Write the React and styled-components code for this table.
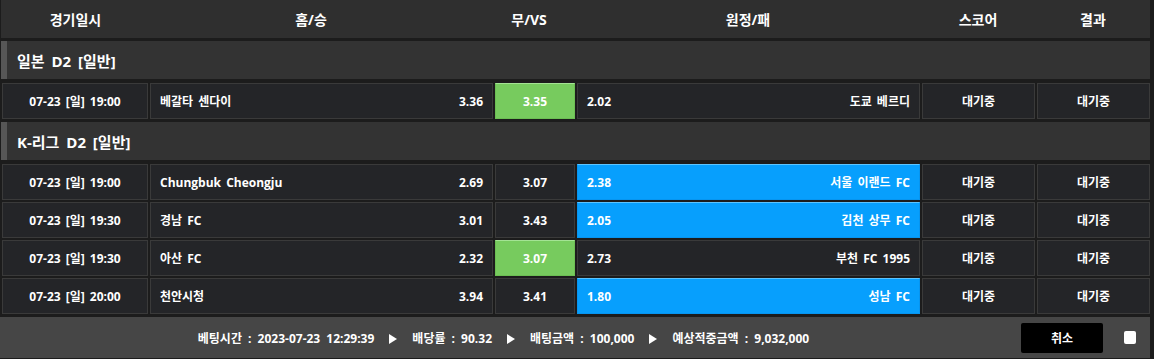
import React from "react";
import styled, { createGlobalStyle, css } from "styled-components";

const GlobalStyle = createGlobalStyle`
  html, body {
    margin: 0;
    padding: 0;
    background: #1c1c1c;
  }
  body {
    font-family: "Open Sans", "Noto Sans CJK KR", sans-serif;
    color: #ffffff;
  }
`;

const Board = styled.div`
  width: 1149px;
  margin-left: 1px;
  display: flex;
  flex-direction: column;
`;

const HeaderRow = styled.div`
  display: grid;
  grid-template-columns: 149px 322px 114px 324px 136px 94px 1fr;
  height: 38px;
  background: #2f2f2f;
  font-size: 14px;
  font-weight: 700;
`;

const HeaderCell = styled.div`
  display: flex;
  align-items: center;
  justify-content: center;
`;

const LeagueRow = styled.div`
  margin-top: 3px;
  height: 38px;
  box-sizing: border-box;
  background: #333333;
  border-left: 6px solid #565656;
  padding-left: 10px;
  display: flex;
  align-items: center;
  font-size: 15px;
  font-weight: 700;
  word-spacing: 3px;
`;

const MatchList = styled.div`
  padding: 4px 0 0 1px;
  display: flex;
  flex-direction: column;
  gap: 2px;
`;

const MatchRow = styled.div`
  display: grid;
  grid-template-columns: 146px 343px 80px 343px 113px 113px;
  column-gap: 2px;
  height: 36px;
  font-size: 12px;
  font-weight: 700;
  word-spacing: 2px;
`;

const variants = {
  plain: css`
    background: #242528;
    border: 1px solid #3a3a3a;
  `,
  green: css`
    background: #77cb5e;
    border: 1px solid #6cbf53;
    border-top-color: #a4e394;
  `,
  blue: css`
    background: #079ffd;
    border: 1px solid #0795f0;
    border-top-color: #5cc4ff;
  `,
};

const Cell = styled.div`
  box-sizing: border-box;
  display: flex;
  align-items: center;
  justify-content: ${(p) => p.$align || "center"};
  padding: 0 9px;
  white-space: nowrap;
  ${(p) => variants[p.$variant || "plain"]}
`;

const Footer = styled.div`
  margin-top: 3px;
  margin-left: -1px;
  width: 1150px;
  height: 41px;
  background: #464646;
  display: flex;
  align-items: center;
  padding-right: 14px;
  box-sizing: border-box;
  font-size: 12px;
  font-weight: 700;
  word-spacing: 3px;
`;

const FooterInfo = styled.div`
  flex: 1;
  margin-right: 14px;
  display: flex;
  align-items: center;
  justify-content: center;
  gap: 15px;
`;

const Arrow = styled.span`
  width: 0;
  height: 0;
  border-top: 5px solid transparent;
  border-bottom: 5px solid transparent;
  border-left: 8px solid #ffffff;
  margin-top: 2px;
`;

const CancelButton = styled.button`
  width: 82px;
  height: 30px;
  margin-right: 21px;
  background: #000000;
  border: none;
  border-radius: 2px;
  color: #ffffff;
  font-family: inherit;
  font-size: 12px;
  font-weight: 700;
  padding: 0;
`;

const CheckBox = styled.span`
  width: 12px;
  height: 13px;
  background: #ffffff;
  border-radius: 2px;
`;

const leagues = [
  {
    name: "일본 D2 [일반]",
    matches: [
      { time: "07-23 [일] 19:00", home: "베갈타 센다이", h: "3.36", d: "3.35", a: "2.02", away: "도쿄 베르디", pick: "d" },
    ],
  },
  {
    name: "K-리그 D2 [일반]",
    matches: [
      { time: "07-23 [일] 19:00", home: "Chungbuk Cheongju", h: "2.69", d: "3.07", a: "2.38", away: "서울 이랜드 FC", pick: "a" },
      { time: "07-23 [일] 19:30", home: "경남 FC", h: "3.01", d: "3.43", a: "2.05", away: "김천 상무 FC", pick: "a" },
      { time: "07-23 [일] 19:30", home: "아산 FC", h: "2.32", d: "3.07", a: "2.73", away: "부천 FC 1995", pick: "d" },
      { time: "07-23 [일] 20:00", home: "천안시청", h: "3.94", d: "3.41", a: "1.80", away: "성남 FC", pick: "a" },
    ],
  },
];

export default function App() {
  return (
    <>
      <GlobalStyle />
      <Board>
        <HeaderRow>
          <HeaderCell>경기일시</HeaderCell>
          <HeaderCell>홈/승</HeaderCell>
          <HeaderCell>무/VS</HeaderCell>
          <HeaderCell>원정/패</HeaderCell>
          <HeaderCell>스코어</HeaderCell>
          <HeaderCell>결과</HeaderCell>
          <HeaderCell />
        </HeaderRow>
        {leagues.map((lg) => (
          <React.Fragment key={lg.name}>
            <LeagueRow>{lg.name}</LeagueRow>
            <MatchList>
              {lg.matches.map((m, i) => (
                <MatchRow key={i}>
                  <Cell>{m.time}</Cell>
                  <Cell $align="space-between" $variant={m.pick === "h" ? "blue" : "plain"}>
                    <span>{m.home}</span>
                    <span>{m.h}</span>
                  </Cell>
                  <Cell $variant={m.pick === "d" ? "green" : "plain"}>{m.d}</Cell>
                  <Cell $align="space-between" $variant={m.pick === "a" ? "blue" : "plain"}>
                    <span>{m.a}</span>
                    <span>{m.away}</span>
                  </Cell>
                  <Cell>대기중</Cell>
                  <Cell>대기중</Cell>
                </MatchRow>
              ))}
            </MatchList>
          </React.Fragment>
        ))}
        <Footer>
          <FooterInfo>
            <span>베팅시간 : 2023-07-23 12:29:39</span>
            <Arrow />
            <span>배당률 : 90.32</span>
            <Arrow />
            <span>배팅금액 : 100,000</span>
            <Arrow />
            <span>예상적중금액 : 9,032,000</span>
          </FooterInfo>
          <CancelButton>취소</CancelButton>
          <CheckBox />
        </Footer>
      </Board>
    </>
  );
}
